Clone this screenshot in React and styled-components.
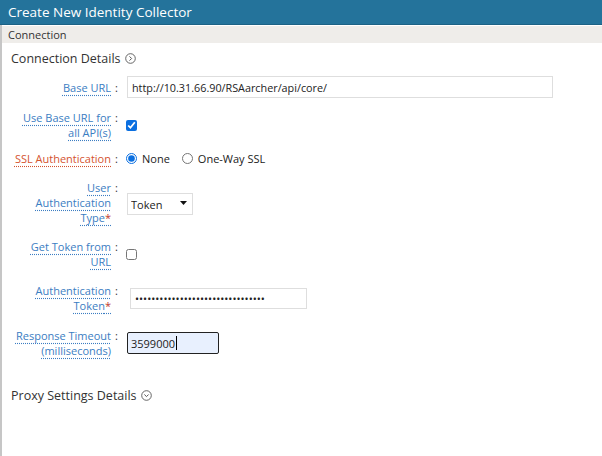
import React from 'react'
import styled, { createGlobalStyle } from 'styled-components'

const GlobalStyle = createGlobalStyle`
  html, body {
    margin: 0;
    padding: 0;
    background: #fff;
  }
  body {
    font-family: "Open Sans", "Liberation Sans", sans-serif;
    color: #333;
  }
`

const Page = styled.div`
  width: 602px;
  height: 456px;
  display: flex;
  flex-direction: column;
  overflow: hidden;
`

const TitleBar = styled.div`
  height: 24px;
  flex-shrink: 0;
  background: #24739b;
  border-bottom: 1px solid #1c6285;
  color: #fff;
  font-size: 13.5px;
  padding-left: 8px;
  display: flex;
  align-items: center;
`

const Body = styled.div`
  flex: 1;
  border-left: 2px solid #c6c6c6;
  display: flex;
  flex-direction: column;
`

const TabBar = styled.div`
  height: 17px;
  margin-top: 1px;
  background: #efedea;
  font-size: 11px;
  color: #333;
  padding-left: 6px;
  display: flex;
  align-items: center;
`

const Content = styled.div`
  padding: 7px 0 0 9px;
  display: flex;
  flex-direction: column;
`

const SectionTitle = styled.div`
  font-size: 12.5px;
  line-height: 17px;
  color: #333;
  display: flex;
  align-items: center;
  gap: 4px;
  margin-top: ${p => p.$top || 0}px;
`

const Row = styled.div`
  display: flex;
  align-items: center;
  margin-top: ${p => (p.$top === undefined ? 14 : p.$top)}px;
`

const LabelCell = styled.div`
  display: flex;
  align-items: flex-start;
  flex-shrink: 0;
  width: 116px;
`

const LabelText = styled.div`
  width: 100px;
  text-align: right;
  font-size: 11px;
  line-height: 15px;
  color: ${p => (p.$error ? '#d4532f' : '#3b7dc2')};
  text-decoration: underline dotted ${p => (p.$error ? '#d4532f' : '#3b7dc2')};
  text-underline-offset: 3px;
`

const Required = styled.span`
  color: #c0392b;
  text-decoration: none;
`

const Colon = styled.span`
  font-size: 11px;
  line-height: 15px;
  color: #333;
  padding-left: 4px;
`

const TextInput = styled.input`
  box-sizing: border-box;
  width: ${p => p.$w}px;
  height: ${p => p.$h || 22}px;
  margin-left: ${p => p.$offset || 0}px;
  border: 1px solid #dedede;
  border-radius: 0;
  padding: 0 4px;
  font-family: "Open Sans", "Liberation Sans", sans-serif;
  font-size: 10.8px;
  color: #222;
  background: #fff;
  outline: none;
`

const FocusedBox = styled.div`
  box-sizing: border-box;
  width: 92px;
  height: 22px;
  border: 1px solid #222;
  border-radius: 2px;
  background: #e8f0fe;
  padding: 0 3px;
  display: flex;
  align-items: center;
  font-size: 11px;
  color: #222;
`

const Caret = styled.span`
  display: inline-block;
  width: 1px;
  height: 14px;
  background: #000;
  margin-left: 1px;
`

const Check = styled.input`
  width: 11px;
  height: 11px;
  margin: 0 0 0 -1px;
  accent-color: #0b6fe0;
`

const RadioGroup = styled.div`
  display: flex;
  align-items: center;
  font-size: 11px;
  line-height: 15px;
  color: #222;
`

const RadioOption = styled.label`
  display: flex;
  align-items: center;
  gap: 5px;
  margin-right: 13px;
  margin-left: -1px;
`

const Radio = styled.input`
  width: 11px;
  height: 11px;
  margin: 0;
  accent-color: #0b6fe0;
`

const SelectWrap = styled.div`
  position: relative;
  width: 66px;
  height: 22px;
`

const Select = styled.select`
  box-sizing: border-box;
  width: 100%;
  height: 100%;
  appearance: none;
  border: 1px solid #dedede;
  border-radius: 0;
  background: #fff;
  padding: 0 3px;
  font-family: "Open Sans", "Liberation Sans", sans-serif;
  font-size: 11px;
  color: #222;
  outline: none;
`

const SelectArrow = styled.svg`
  position: absolute;
  right: 6px;
  top: 9px;
  pointer-events: none;
`

const CircleChevron = ({ down }) => (
  <svg width="11" height="11" viewBox="0 0 11 11">
    <circle cx="5.5" cy="5.5" r="4.8" fill="none" stroke="#555" strokeWidth="0.9" />
    {down ? (
      <polyline points="3.4,4.5 5.5,6.6 7.6,4.5" fill="none" stroke="#555" strokeWidth="1" />
    ) : (
      <polyline points="4.5,3.4 6.6,5.5 4.5,7.6" fill="none" stroke="#555" strokeWidth="1" />
    )}
  </svg>
)

const Label = ({ children, error }) => (
  <LabelCell>
    <LabelText $error={error}>{children}</LabelText>
    <Colon>:</Colon>
  </LabelCell>
)

export default function App() {
  return (
    <>
      <GlobalStyle />
      <Page>
        <TitleBar>Create New Identity Collector</TitleBar>
        <Body>
          <TabBar>Connection</TabBar>
          <Content>
            <SectionTitle>
              Connection Details <CircleChevron />
            </SectionTitle>

            <Row $top={9}>
              <Label>Base URL</Label>
              <TextInput $w={426} defaultValue="http://10.31.66.90/RSAarcher/api/core/" />
            </Row>

            <Row $top={12}>
              <Label>
                Use Base URL for
                <br />
                all API(s)
              </Label>
              <Check type="checkbox" defaultChecked />
            </Row>

            <Row $top={11}>
              <Label error>SSL Authentication</Label>
              <RadioGroup>
                <RadioOption>
                  <Radio type="radio" name="ssl" defaultChecked />
                  None
                </RadioOption>
                <RadioOption>
                  <Radio type="radio" name="ssl" />
                  One-Way SSL
                </RadioOption>
              </RadioGroup>
            </Row>

            <Row>
              <Label>
                User
                <br />
                Authentication
                <br />
                Type<Required>*</Required>
              </Label>
              <SelectWrap>
                <Select defaultValue="token">
                  <option value="token">Token</option>
                </Select>
                <SelectArrow width="7" height="4" viewBox="0 0 7 4">
                  <polygon points="0,0 7,0 3.5,4" fill="#111" />
                </SelectArrow>
              </SelectWrap>
            </Row>

            <Row>
              <Label>
                Get Token from
                <br />
                URL
              </Label>
              <Check type="checkbox" />
            </Row>

            <Row>
              <Label>
                Authentication
                <br />
                Token<Required>*</Required>
              </Label>
              <TextInput
                type="password"
                $w={177}
                $h={21}
                $offset={3}
                defaultValue="••••••••••••••••••••••••••••••••"
              />
            </Row>

            <Row $top={15}>
              <Label>
                Response Timeout
                <br />
                (milliseconds)
              </Label>
              <FocusedBox>
                3599000
                <Caret />
              </FocusedBox>
            </Row>

            <SectionTitle $top={29}>
              Proxy Settings Details <CircleChevron down />
            </SectionTitle>
          </Content>
        </Body>
      </Page>
    </>
  )
}
